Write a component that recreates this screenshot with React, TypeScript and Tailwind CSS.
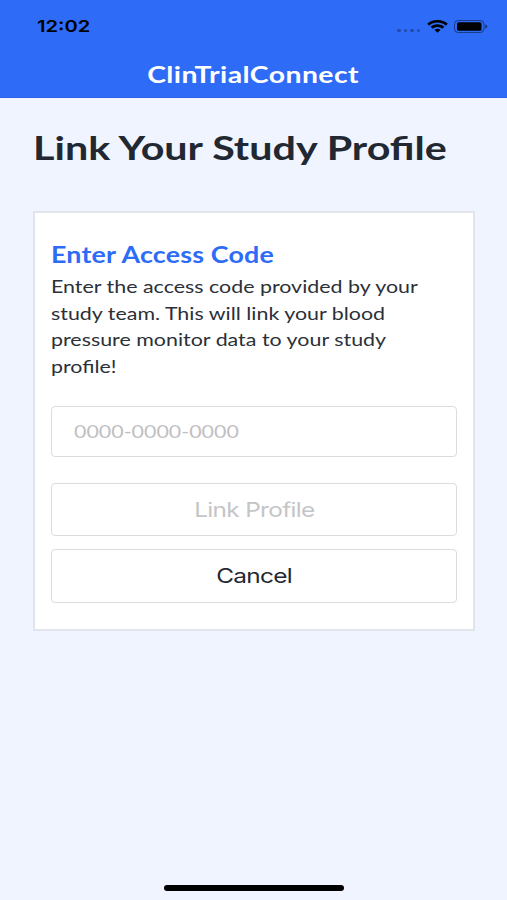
import { useState } from "react";

function StatusBar() {
  return (
    <div className="flex h-[52px] items-center justify-between pr-[19px] pl-[37px] text-black">
      <span className="origin-left scale-x-[1.22] font-['Inter',sans-serif] text-[16.5px] font-semibold">
        12:02
      </span>
      <div className="flex items-center">
        <div className="mt-[9px] mr-[7px] flex gap-[3px]">
          <span className="h-[3px] w-[3.5px] rounded-full bg-black/30" />
          <span className="h-[3px] w-[3.5px] rounded-full bg-black/30" />
          <span className="h-[3px] w-[3.5px] rounded-full bg-black/30" />
          <span className="h-[3px] w-[3.5px] rounded-full bg-black/30" />
        </div>
        <svg
          aria-hidden
          className="mr-[6px]"
          height="13"
          preserveAspectRatio="none"
          viewBox="0 0 17 12"
          width="21"
        >
          <path
            d="M8.5 2.4c2.4 0 4.7.9 6.4 2.6.1.1.3.1.5 0l1.2-1.3c.1-.1.1-.4 0-.5-4.5-4.3-11.7-4.3-16.2 0-.1.1-.1.4 0 .5L1.6 5c.2.1.4.1.5 0C3.8 3.3 6.1 2.4 8.5 2.4Zm0 4c1.3 0 2.6.5 3.6 1.4.1.1.3.1.5 0l1.2-1.3c.1-.1.1-.4 0-.5-3-2.8-7.6-2.8-10.6 0-.1.1-.1.4 0 .5l1.2 1.3c.2.1.4.1.5 0 1-.9 2.3-1.4 3.6-1.4Zm2.3 2.9c.1-.1.1-.3 0-.4-1.3-1.2-3.3-1.2-4.6 0-.1.1-.1.3 0 .4l2.1 2.2c.1.1.3.1.4 0l2.1-2.2Z"
            fill="currentColor"
          />
        </svg>
        <svg aria-hidden height="13" viewBox="0 0 34 13" width="34">
          <rect
            fill="none"
            height="12"
            opacity="0.45"
            rx="3.6"
            stroke="currentColor"
            width="29.5"
            x="0.5"
            y="0.5"
          />
          <rect
            fill="currentColor"
            height="8.4"
            rx="1.5"
            width="24.5"
            x="3"
            y="2.3"
          />
          <path
            d="M31.3 4.5v4c1.2-.3 2-1.1 2-2s-.8-1.7-2-2Z"
            fill="currentColor"
            opacity="0.5"
          />
        </svg>
      </div>
    </div>
  );
}

export default function App() {
  const [code, setCode] = useState("");

  return (
    <div className="flex h-[900px] w-[507px] flex-col overflow-hidden bg-[#f0f4fe] font-['Lato',sans-serif] text-[#222831]">
      <header className="h-[98px] border-b border-[#2a62e0] bg-[#2e6bf6]">
        <StatusBar />
        <div className="flex h-[45px] items-center justify-center">
          <span className="scale-x-[1.26] text-[22.5px] font-bold tracking-[0.35px] whitespace-nowrap text-white">
            ClinTrialConnect
          </span>
        </div>
      </header>

      <main className="flex-1 pr-8 pl-[33px]">
        <h1 className="mt-[27px] h-[44px] w-max origin-left scale-x-[1.25] text-[33px] leading-[44px] font-bold">
          Link Your Study Profile
        </h1>

        <section className="mt-[42px] h-[420px] border-2 border-[#e1e4ea] bg-white px-4 pt-[27px]">
          <h2 className="h-[30px] w-max origin-left scale-x-[1.22] text-[22px] leading-[30px] font-bold tracking-[0.15px] text-[#2e6bf6]">
            Enter Access Code
          </h2>
          <p className="mt-[4px] w-max origin-left scale-x-[1.21] text-[17.7px] leading-[26.6px] text-[#2c3038]">
            Enter the access code provided by your
            <br />
            study team. This will link your blood
            <br />
            pressure monitor data to your study
            <br />
            profile!
          </p>
          <div className="mt-[26px] flex h-[51px] items-center rounded-[4px] border border-[#dadcdf] px-[22px]">
            <input
              aria-label="Access code"
              className="w-[290px] origin-left scale-x-[1.21] bg-transparent text-[17.7px] outline-none placeholder:text-[#bfc0c2]"
              onChange={(event) => setCode(event.target.value)}
              placeholder="0000-0000-0000"
              value={code}
            />
          </div>
          <button
            className="mt-[26px] flex h-[53px] w-full items-center justify-center rounded-[4px] border border-[#dadcdf] font-['Inter',sans-serif] text-[20px] tracking-[-0.55px] text-[#c4c5c7]"
            disabled={!code}
            type="button"
          >
            <span className="scale-x-[1.22]">Link Profile</span>
          </button>
          <button
            className="mt-[13px] flex h-[54px] w-full items-center justify-center rounded-[4px] border border-[#dadcdf] font-['Inter',sans-serif] text-[20px] tracking-[-0.6px]"
            type="button"
          >
            <span className="scale-x-[1.22]">Cancel</span>
          </button>
        </section>
      </main>

      <div className="mb-[9px] ml-[164px] h-[6px] w-[180px] rounded-full bg-black" />
    </div>
  );
}
